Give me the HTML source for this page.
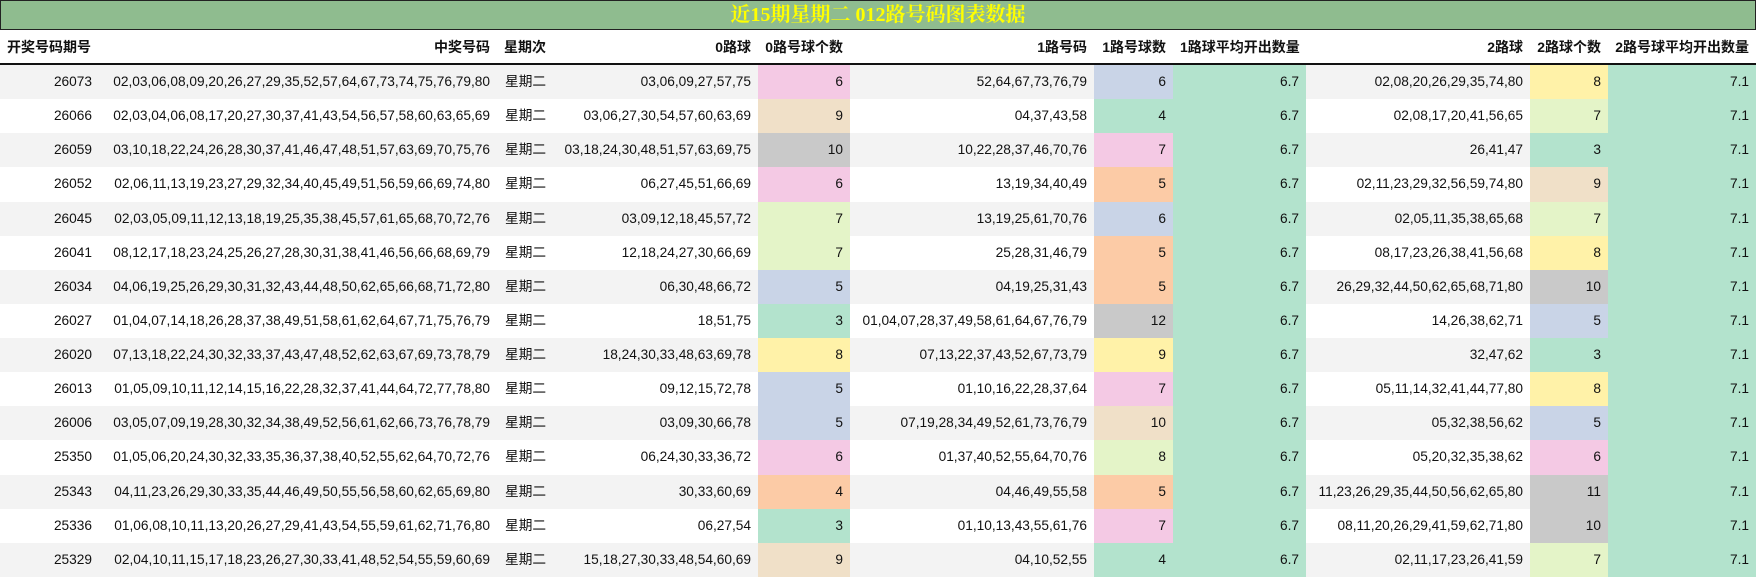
<!DOCTYPE html>
<html><head><meta charset="utf-8"><style>
html,body{margin:0;padding:0;background:#fff;width:1756px;height:576px;overflow:hidden}
body{font-family:"Liberation Sans","Noto Sans CJK SC",sans-serif;color:#111}
.title{position:absolute;left:0;top:0;width:1754px;height:28px;background:#8fbc8f;border:1px solid #222;color:#ffff00;font-weight:bold;font-size:20px;text-align:center;line-height:28px;font-family:"Liberation Serif","Noto Serif CJK SC",serif}
table{position:absolute;left:0;top:30px;border-collapse:collapse;table-layout:fixed;width:1756px}
td,th{padding:0 7px;white-space:nowrap;overflow:hidden;font-size:13.7px;text-align:right}
th{height:33px;font-weight:bold;border-bottom:2px solid #111;font-size:14px}
th.l{text-align:left}
td{height:34.13px;line-height:34px}
tr:nth-child(even) td{background:#f3f3f3}
tr:nth-child(odd) td{background:#fff}
td.wk{text-align:left;padding-left:8px}
tr td.p{background:#f4c9e4}
tr td.b{background:#f0e0c8}
tr td.g{background:#c9c9c9}
tr td.lg{background:#e4f4c8}
tr td.bl{background:#c9d4e7}
tr td.m{background:#b3e3cd}
tr td.y{background:#fff2a8}
tr td.pe{background:#fccba6}
</style></head><body>
<div class="title">近15期星期二 012路号码图表数据</div>
<table>
<colgroup><col style="width:99px"><col style="width:398px"><col style="width:60px"><col style="width:201px"><col style="width:92px"><col style="width:244px"><col style="width:79px"><col style="width:133px"><col style="width:224px"><col style="width:78px"><col style="width:148px"></colgroup>
<tr><th class="l">开奖号码期号</th><th>中奖号码</th><th class="l">星期次</th><th>0路球</th><th>0路号球个数</th><th>1路号码</th><th>1路号球数</th><th class="l">1路球平均开出数量</th><th>2路球</th><th>2路球个数</th><th>2路号球平均开出数量</th></tr>
<tr><td>26073</td><td>02,03,06,08,09,20,26,27,29,35,52,57,64,67,73,74,75,76,79,80</td><td class="wk">星期二</td><td>03,06,09,27,57,75</td><td class="p">6</td><td>52,64,67,73,76,79</td><td class="bl">6</td><td class="m">6.7</td><td>02,08,20,26,29,35,74,80</td><td class="y">8</td><td class="m">7.1</td></tr>
<tr><td>26066</td><td>02,03,04,06,08,17,20,27,30,37,41,43,54,56,57,58,60,63,65,69</td><td class="wk">星期二</td><td>03,06,27,30,54,57,60,63,69</td><td class="b">9</td><td>04,37,43,58</td><td class="m">4</td><td class="m">6.7</td><td>02,08,17,20,41,56,65</td><td class="lg">7</td><td class="m">7.1</td></tr>
<tr><td>26059</td><td>03,10,18,22,24,26,28,30,37,41,46,47,48,51,57,63,69,70,75,76</td><td class="wk">星期二</td><td>03,18,24,30,48,51,57,63,69,75</td><td class="g">10</td><td>10,22,28,37,46,70,76</td><td class="p">7</td><td class="m">6.7</td><td>26,41,47</td><td class="m">3</td><td class="m">7.1</td></tr>
<tr><td>26052</td><td>02,06,11,13,19,23,27,29,32,34,40,45,49,51,56,59,66,69,74,80</td><td class="wk">星期二</td><td>06,27,45,51,66,69</td><td class="p">6</td><td>13,19,34,40,49</td><td class="pe">5</td><td class="m">6.7</td><td>02,11,23,29,32,56,59,74,80</td><td class="b">9</td><td class="m">7.1</td></tr>
<tr><td>26045</td><td>02,03,05,09,11,12,13,18,19,25,35,38,45,57,61,65,68,70,72,76</td><td class="wk">星期二</td><td>03,09,12,18,45,57,72</td><td class="lg">7</td><td>13,19,25,61,70,76</td><td class="bl">6</td><td class="m">6.7</td><td>02,05,11,35,38,65,68</td><td class="lg">7</td><td class="m">7.1</td></tr>
<tr><td>26041</td><td>08,12,17,18,23,24,25,26,27,28,30,31,38,41,46,56,66,68,69,79</td><td class="wk">星期二</td><td>12,18,24,27,30,66,69</td><td class="lg">7</td><td>25,28,31,46,79</td><td class="pe">5</td><td class="m">6.7</td><td>08,17,23,26,38,41,56,68</td><td class="y">8</td><td class="m">7.1</td></tr>
<tr><td>26034</td><td>04,06,19,25,26,29,30,31,32,43,44,48,50,62,65,66,68,71,72,80</td><td class="wk">星期二</td><td>06,30,48,66,72</td><td class="bl">5</td><td>04,19,25,31,43</td><td class="pe">5</td><td class="m">6.7</td><td>26,29,32,44,50,62,65,68,71,80</td><td class="g">10</td><td class="m">7.1</td></tr>
<tr><td>26027</td><td>01,04,07,14,18,26,28,37,38,49,51,58,61,62,64,67,71,75,76,79</td><td class="wk">星期二</td><td>18,51,75</td><td class="m">3</td><td>01,04,07,28,37,49,58,61,64,67,76,79</td><td class="g">12</td><td class="m">6.7</td><td>14,26,38,62,71</td><td class="bl">5</td><td class="m">7.1</td></tr>
<tr><td>26020</td><td>07,13,18,22,24,30,32,33,37,43,47,48,52,62,63,67,69,73,78,79</td><td class="wk">星期二</td><td>18,24,30,33,48,63,69,78</td><td class="y">8</td><td>07,13,22,37,43,52,67,73,79</td><td class="y">9</td><td class="m">6.7</td><td>32,47,62</td><td class="m">3</td><td class="m">7.1</td></tr>
<tr><td>26013</td><td>01,05,09,10,11,12,14,15,16,22,28,32,37,41,44,64,72,77,78,80</td><td class="wk">星期二</td><td>09,12,15,72,78</td><td class="bl">5</td><td>01,10,16,22,28,37,64</td><td class="p">7</td><td class="m">6.7</td><td>05,11,14,32,41,44,77,80</td><td class="y">8</td><td class="m">7.1</td></tr>
<tr><td>26006</td><td>03,05,07,09,19,28,30,32,34,38,49,52,56,61,62,66,73,76,78,79</td><td class="wk">星期二</td><td>03,09,30,66,78</td><td class="bl">5</td><td>07,19,28,34,49,52,61,73,76,79</td><td class="b">10</td><td class="m">6.7</td><td>05,32,38,56,62</td><td class="bl">5</td><td class="m">7.1</td></tr>
<tr><td>25350</td><td>01,05,06,20,24,30,32,33,35,36,37,38,40,52,55,62,64,70,72,76</td><td class="wk">星期二</td><td>06,24,30,33,36,72</td><td class="p">6</td><td>01,37,40,52,55,64,70,76</td><td class="lg">8</td><td class="m">6.7</td><td>05,20,32,35,38,62</td><td class="p">6</td><td class="m">7.1</td></tr>
<tr><td>25343</td><td>04,11,23,26,29,30,33,35,44,46,49,50,55,56,58,60,62,65,69,80</td><td class="wk">星期二</td><td>30,33,60,69</td><td class="pe">4</td><td>04,46,49,55,58</td><td class="pe">5</td><td class="m">6.7</td><td>11,23,26,29,35,44,50,56,62,65,80</td><td class="g">11</td><td class="m">7.1</td></tr>
<tr><td>25336</td><td>01,06,08,10,11,13,20,26,27,29,41,43,54,55,59,61,62,71,76,80</td><td class="wk">星期二</td><td>06,27,54</td><td class="m">3</td><td>01,10,13,43,55,61,76</td><td class="p">7</td><td class="m">6.7</td><td>08,11,20,26,29,41,59,62,71,80</td><td class="g">10</td><td class="m">7.1</td></tr>
<tr><td>25329</td><td>02,04,10,11,15,17,18,23,26,27,30,33,41,48,52,54,55,59,60,69</td><td class="wk">星期二</td><td>15,18,27,30,33,48,54,60,69</td><td class="b">9</td><td>04,10,52,55</td><td class="m">4</td><td class="m">6.7</td><td>02,11,17,23,26,41,59</td><td class="lg">7</td><td class="m">7.1</td></tr>
</table>
</body></html>
